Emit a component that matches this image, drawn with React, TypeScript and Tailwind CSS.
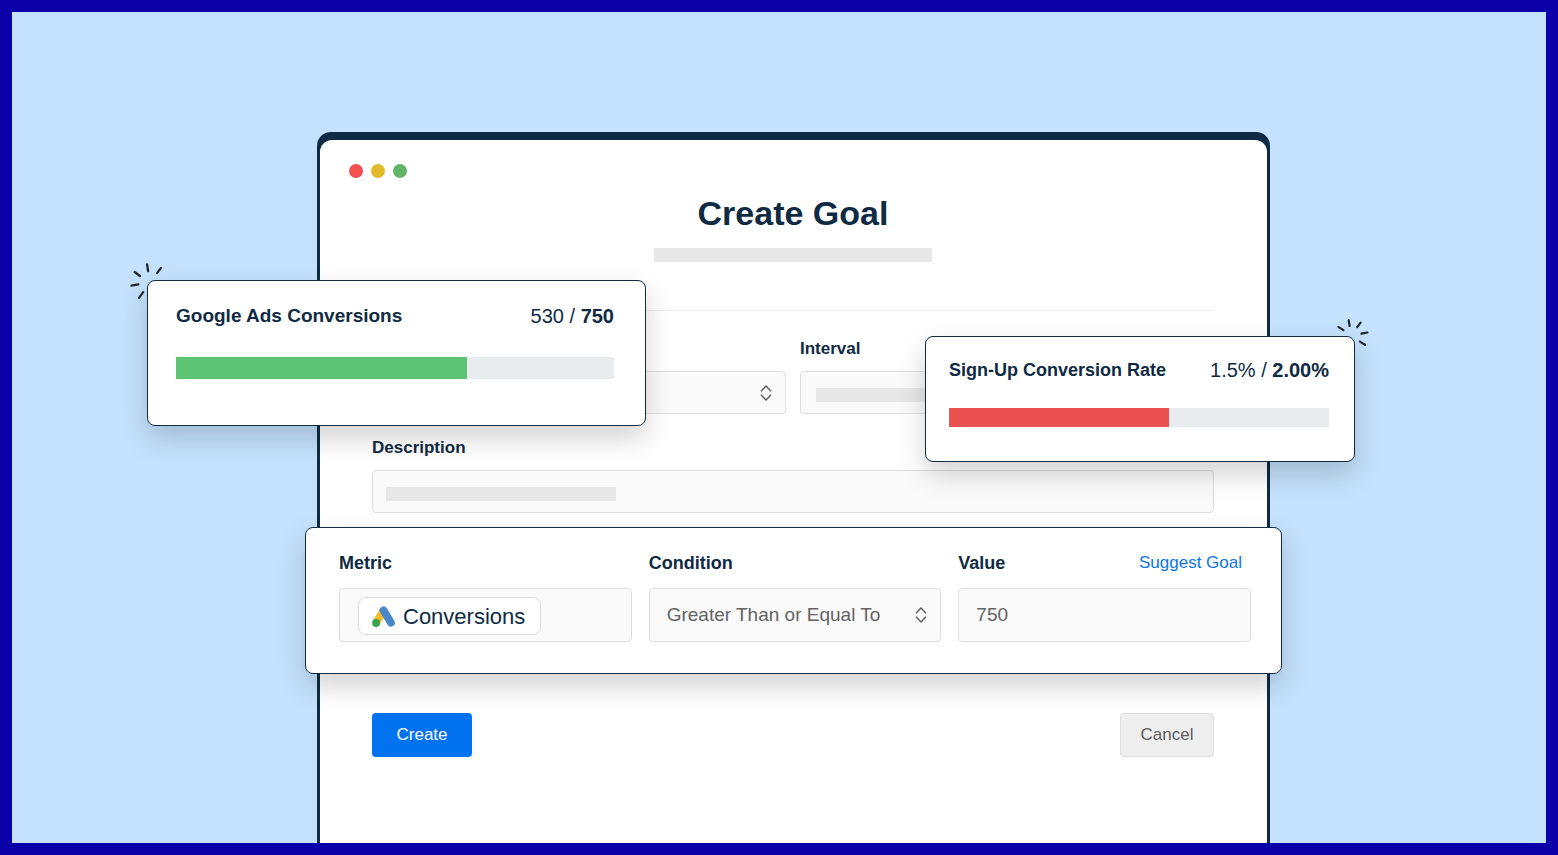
import React from "react";
import clsx from "clsx";

const fieldStyles = "w-full rounded-sm border border-[#dedede] bg-[#fafafa]";

const ChevronUpDown: React.FC = () => (
  <svg
    viewBox="0 0 12 16"
    className="pointer-events-none absolute top-1/2 right-[14px] h-4 w-3 -translate-y-1/2"
    fill="none"
    stroke="#5c5c5c"
    strokeWidth="1.4"
    aria-hidden="true"
  >
    <path d="M1 6.2 6 1l5 5.2M1 9.8 6 15l5-5.2" />
  </svg>
);

const AdsLogo: React.FC = () => (
  <svg viewBox="0 0 68 62" className="h-[21px] w-[23px]" aria-hidden="true">
    <path d="M34 13 12 50" stroke="#f4bb2b" strokeWidth="23" />
    <path d="M34 12.5 56 49.5" stroke="#4688cb" strokeWidth="23" strokeLinecap="round" />
    <circle cx="12" cy="50" r="11.7" fill="#3aa350" />
  </svg>
);

interface SkeletonProps {
  className?: string;
}

const Skeleton: React.FC<SkeletonProps> = ({ className }) => (
  <div className={clsx("h-[14px] bg-[#e7e7e7]", className)} />
);

interface ProgressCardProps {
  title: string;
  current: string;
  target: string;
  percent: number;
  className: string;
  titleClass: string;
  barClass: string;
  fillClass: string;
  children?: React.ReactNode;
}

const ProgressCard: React.FC<ProgressCardProps> = ({
  title,
  current,
  target,
  percent,
  className,
  titleClass,
  barClass,
  fillClass,
  children,
}) => (
  <section
    className={clsx(
      "absolute z-10 rounded-lg border border-[#0f2b43] bg-white shadow-[0_12px_28px_rgba(0,0,0,0.18)]",
      className
    )}
  >
    <div className="flex items-center justify-between leading-6 whitespace-nowrap">
      <h2 className={clsx("font-bold", titleClass)}>{title}</h2>
      <p className="text-[20px] leading-6">
        {current} / <strong>{target}</strong>
      </p>
    </div>
    <div className={clsx("bg-[#e8ecef]", barClass)}>
      <div className={clsx("h-full", fillClass)} style={{ width: `${percent}%` }} />
    </div>
    {children}
  </section>
);

export default function App() {
  return (
    <main className="flex min-h-screen flex-col overflow-hidden border-[12px] border-[#0c00a8] bg-[#c4e2fd] pt-[120px] pl-[29px] font-['Liberation_Sans',Arial,sans-serif] text-[#0f2b43]">
      <div className="relative mx-auto flex w-full max-w-[953px] flex-1 flex-col rounded-t-[14px] bg-[#0f2b43] px-[3px] pt-2">
        <div className="flex-1 rounded-t-[12px] bg-white pt-6 pr-[53px] pb-8 pl-[52px]">
          <div className="-ml-[23px] flex gap-2">
            <span className="size-[14px] rounded-full bg-[#f4504f]" />
            <span className="size-[14px] rounded-full bg-[#dfbb2b]" />
            <span className="size-[14px] rounded-full bg-[#62b566]" />
          </div>

          <h1 className="mt-[15px] text-center text-[34px] leading-10 font-bold">Create Goal</h1>
          <Skeleton className="mx-auto mt-[15px] w-[278px]" />
          <hr className="mt-12 border-[#ececec]" />

          <form onSubmit={(e) => e.preventDefault()}>
            <div className="mt-7 grid grid-cols-2 items-end gap-[14px]">
              <div className="relative">
                <select aria-label="Goal type" className={clsx(fieldStyles, "block h-[43px] appearance-none")} />
                <ChevronUpDown />
              </div>
              <div>
                <label htmlFor="interval" className="block text-[17px] leading-5 font-bold">
                  Interval
                </label>
                <div className="relative mt-3">
                  <select id="interval" className={clsx(fieldStyles, "block h-[43px] appearance-none")} />
                  <Skeleton className="pointer-events-none absolute top-[17px] left-4 w-[230px]" />
                </div>
              </div>
            </div>

            <label htmlFor="description" className="mt-6 block text-[17px] leading-5 font-bold">
              Description
            </label>
            <div className="relative mt-3">
              <input id="description" type="text" className={clsx(fieldStyles, "block h-[43px] px-4")} />
              <Skeleton className="pointer-events-none absolute top-[17px] left-[14px] w-[230px]" />
            </div>

            <div className="relative -mr-[68px] -ml-[67px] mt-[14px] grid grid-cols-3 gap-[17px] rounded-lg border border-[#0f2b43] bg-white pt-[25px] pr-[30px] pb-[31px] pl-[33px] shadow-[0_12px_28px_rgba(0,0,0,0.18)]">
              <div>
                <label htmlFor="metric" className="block text-[18px] leading-5 font-bold">
                  Metric
                </label>
                <div className={clsx(fieldStyles, "mt-[15px] h-[54px] px-[18px] pt-2")}>
                  <button
                    id="metric"
                    type="button"
                    className="flex h-[38px] items-center gap-2 rounded-lg border border-[#dedede] bg-white pr-[15px] pl-[13px] text-[22px]"
                  >
                    <AdsLogo />
                    Conversions
                  </button>
                </div>
              </div>
              <div>
                <label htmlFor="condition" className="block text-[18px] leading-5 font-bold">
                  Condition
                </label>
                <div className="relative mt-[15px]">
                  <select
                    id="condition"
                    className={clsx(fieldStyles, "block h-[54px] appearance-none pl-[17px] text-[19px] text-[#636363]")}
                  >
                    <option>Greater Than or Equal To</option>
                  </select>
                  <ChevronUpDown />
                </div>
              </div>
              <div>
                <div className="flex justify-between pr-[9px] leading-5">
                  <label htmlFor="value" className="text-[18px] leading-5 font-bold">
                    Value
                  </label>
                  <a href="#suggest" className="text-[17px] leading-5 text-[#0b76e8]">
                    Suggest Goal
                  </a>
                </div>
                <input
                  id="value"
                  type="text"
                  defaultValue="750"
                  className={clsx(fieldStyles, "mt-[15px] block h-[54px] px-[17px] text-[19px] text-[#636363]")}
                />
              </div>
            </div>

            <div className="mt-[39px] flex justify-between text-[17px]">
              <button type="submit" className="h-[44px] w-[100px] rounded-sm bg-[#0273f0] text-white">
                Create
              </button>
              <button
                type="button"
                className="h-[44px] w-[94px] rounded-sm border border-[#dedede] bg-[#eeeeee] text-[#5c5c5c]"
              >
                Cancel
              </button>
            </div>
          </form>
        </div>

        <ProgressCard
          title="Google Ads Conversions"
          current="530"
          target="750"
          percent={66.4}
          className="top-[148px] -left-[170px] w-[499px] pt-[23px] pr-[31px] pb-[46px] pl-7"
          titleClass="text-[19px]"
          barClass="mt-[29px] h-[22px]"
          fillClass="bg-[#5cc473]"
        >
          <svg
            viewBox="0 0 36 40"
            className="absolute -top-[19px] -left-[19px] h-10 w-9"
            stroke="#20242b"
            strokeWidth="2.2"
            strokeLinecap="round"
            aria-hidden="true"
          >
            <path d="M18 2.3 19.2 9.2M32 5.8 28 11.2M5.6 10 11 14M2.4 23.6 9.4 22.4M14.2 30.2 10 35.8" />
          </svg>
        </ProgressCard>

        <ProgressCard
          title="Sign-Up Conversion Rate"
          current="1.5%"
          target="2.00%"
          percent={57.8}
          className="top-[204px] -right-[85px] w-[430px] pt-[21px] pr-[25px] pb-[34px] pl-[23px]"
          titleClass="text-[18px]"
          barClass="mt-[26px] h-[19px]"
          fillClass="bg-[#ea5151]"
        >
          <svg
            viewBox="0 0 34 30"
            className="absolute -top-[19px] -right-4 h-[30px] w-[34px]"
            stroke="#20242b"
            strokeWidth="2.2"
            strokeLinecap="round"
            aria-hidden="true"
          >
            <path d="M2.4 8.8 7.4 12.2M12.7 2.2 13.6 8M24.6 4.6 21.2 9.2M31.4 14.5 25.4 15.7M23.9 23.6 29 26.8" />
          </svg>
        </ProgressCard>
      </div>
    </main>
  );
}
